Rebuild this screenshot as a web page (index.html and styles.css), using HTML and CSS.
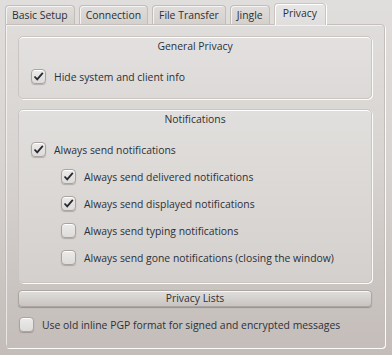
FILE: index.html
```html
<!DOCTYPE html>
<html lang="en">
<head>
    <meta charset="UTF-8">
    <title>Privacy Settings</title>
    <link rel="stylesheet" href="styles.css">
</head>
<body>
    <div class="tabs">
        <div class="tab">Basic Setup</div>
        <div class="tab">Connection</div>
        <div class="tab">File Transfer</div>
        <div class="tab">Jingle</div>
        <div class="tab active">Privacy</div>
    </div>

    <div class="panel">
        <div class="group">
            <div class="group-title">General Privacy</div>
            <div class="group-body">
                <label class="check checked"><span class="box"></span>Hide system and client info</label>
            </div>
        </div>

        <div class="group notifications">
            <div class="group-title">Notifications</div>
            <div class="group-body">
                <label class="check checked"><span class="box"></span>Always send notifications</label>
                <label class="check sub checked"><span class="box"></span>Always send delivered notifications</label>
                <label class="check sub checked"><span class="box"></span>Always send displayed notifications</label>
                <label class="check sub"><span class="box"></span>Always send typing notifications</label>
                <label class="check sub"><span class="box"></span>Always send gone notifications (closing the window)</label>
            </div>
        </div>

        <button class="wide-btn">Privacy Lists</button>

        <label class="check plain"><span class="box"></span>Use old inline PGP format for signed and encrypted messages</label>
    </div>
</body>
</html>
```

FILE: styles.css
```css
:root {
    --text: #2c3038;
    --frame: #b3aca8;
    --highlight: #fbfbfa;
}

* {
    margin: 0;
    padding: 0;
    box-sizing: border-box;
}

body {
    width: 392px;
    height: 355px;
    overflow: hidden;
    font-family: 'Open Sans', 'Noto Sans', sans-serif;
    font-size: 10.4px;
    color: var(--text);
    background: linear-gradient(#e0dedc 0%, #d8d4d1 45%, #c3bcb8 100%);
}

/* tab strip */
.tabs {
    display: flex;
    align-items: flex-end;
    gap: 4px;
    height: 24px;
    padding-left: 5px;
}

.tab {
    height: 19px;
    padding: 0 6px;
    line-height: 18px;
    border: 1px solid #c2bdb9;
    border-bottom: none;
    border-radius: 4px 4px 0 0;
    background: linear-gradient(#dfdcda, #d4d0cd);
    box-shadow: inset 1px 1px 0 rgba(255,255,255,0.7);
}

.tab.active {
    position: relative;
    height: 22px;
    margin-bottom: -1px;
    padding: 0 8px;
    line-height: 19px;
    background: linear-gradient(#e8e6e5, #e0dedc);
    border-color: #cac5c2;
    box-shadow: inset 1px 1px 0 #fff, 1px 0 0 #fff;
    z-index: 1;
}

/* page frame */
.panel {
    width: 380px;
    height: 324px;
    margin-left: 5px;
    padding: 11px 12px 0;
    border: 1px solid #c4beba;
    border-radius: 0 4px 4px 4px;
    box-shadow: inset 1px 1px 0 rgba(255,255,255,0.6), 1px 1px 0 var(--highlight);
}

.group {
    border: 1px solid #cac5c2;
    border-radius: 5px;
    background: linear-gradient(#e3e1e0, #dcd9d7);
    box-shadow: inset 0 1px 0 #fff, 1px 1px 0 var(--highlight);
    margin-bottom: 10px;
}

.notifications {
    margin-bottom: 7px;
    background: linear-gradient(#e1dfdd, #d4d0cd);
}

.group-title {
    height: 19px;
    line-height: 19px;
    text-align: center;
}

.group-body {
    padding: 7px 0 8px 12px;
}

.notifications .group-body {
    padding-bottom: 11px;
}

/* checkboxes */
.check {
    display: flex;
    align-items: center;
    gap: 8px;
    height: 27px;
}

.check.sub {
    padding-left: 30px;
}

.check.plain {
    height: 35px;
    padding-left: 1px;
}

.box {
    width: 15px;
    height: 15px;
    flex-shrink: 0;
    border: 1px solid #aaa4a0;
    border-radius: 4px;
    background: linear-gradient(#ecebea, #dedbd9);
    box-shadow: 0 1px 1px rgba(0,0,0,0.2), inset 0 1px 0 #fff;
}

.checked .box {
    background:
        url("data:image/svg+xml;utf8,<svg xmlns='http://www.w3.org/2000/svg' width='13' height='13'><path d='M2.5 6.5 L5.2 9.3 L10.8 2.8' fill='none' stroke='%23262a30' stroke-width='1.8'/></svg>") center / 13px 13px no-repeat,
        linear-gradient(#ecebea, #dedbd9);
}

.wide-btn {
    display: block;
    width: 100%;
    height: 17px;
    font: inherit;
    color: var(--text);
    line-height: 15px;
    border: 1px solid #aca6a2;
    border-radius: 4px;
    background: linear-gradient(#e0dedc, #c9c4c1);
    box-shadow: 0 1px 1px rgba(0,0,0,0.25), inset 0 1px 0 rgba(255,255,255,0.8);
}
```
